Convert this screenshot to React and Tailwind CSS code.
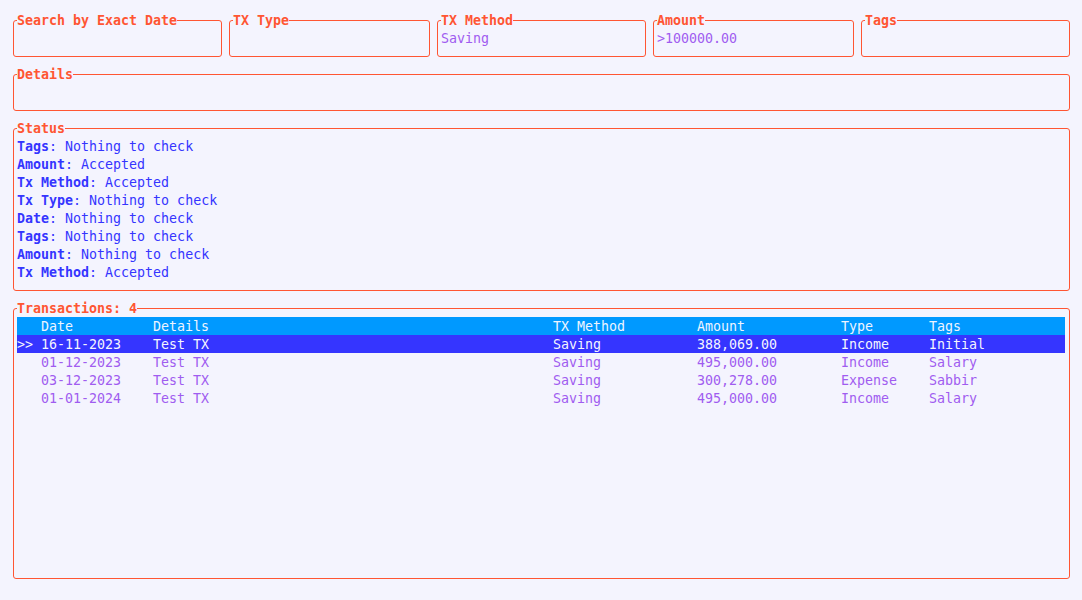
import React from 'react';

const statusLines = [
  ['Tags', 'Nothing to check'],
  ['Amount', 'Accepted'],
  ['Tx Method', 'Accepted'],
  ['Tx Type', 'Nothing to check'],
  ['Date', 'Nothing to check'],
  ['Tags', 'Nothing to check'],
  ['Amount', 'Nothing to check'],
  ['Tx Method', 'Accepted'],
];

const rows = [
  ['16-11-2023', 'Test TX', 'Saving', '388,069.00', 'Income', 'Initial'],
  ['01-12-2023', 'Test TX', 'Saving', '495,000.00', 'Income', 'Salary'],
  ['03-12-2023', 'Test TX', 'Saving', '300,278.00', 'Expense', 'Sabbir'],
  ['01-01-2024', 'Test TX', 'Saving', '495,000.00', 'Income', 'Salary'],
];

// one terminal line: 18px tall, text nudged 1px down to sit like the tui cell
const line = 'h-[18px] pt-[2px] leading-[16px] whitespace-pre';

// terminal style box: legend sits on the top border line
const Box = ({ title, className = '', children }) => (
  <fieldset className={`border border-[#ff5533] rounded-[3px] min-w-0 ${className}`}>
    <legend className={`ml-[3px] font-bold text-[#ff5533] ${line}`}>{title}</legend>
    {children}
  </fieldset>
);

const Cols = ({ cells, className }) => (
  <div className={`grid grid-cols-[24px_112px_400px_144px_144px_88px_1fr] ${line} ${className}`}>
    {cells.map((c, i) => (
      <span key={i}>{c}</span>
    ))}
  </div>
);

export default function App() {
  return (
    <div
      className="min-h-[600px] bg-[#f4f4fe] pt-[11px] pl-[13px] pr-[12px] text-[13.3px] leading-[18px]"
      style={{ fontFamily: '"DejaVu Sans Mono", "Liberation Mono", monospace' }}
    >
      <div className="grid grid-cols-[209px_201px_209px_201px_209px] gap-[7px]">
        <Box title="Search by Exact Date" className="h-[46px]" />
        <Box title="TX Type" className="h-[46px]" />
        <Box title="TX Method" className="h-[46px]">
          <div className={`pl-[3px] text-[#a05cf0] ${line}`}>Saving</div>
        </Box>
        <Box title="Amount" className="h-[46px]">
          <div className={`pl-[3px] text-[#a05cf0] ${line}`}>&gt;100000.00</div>
        </Box>
        <Box title="Tags" className="h-[46px]" />
      </div>

      <Box title="Details" className="h-[46px] mt-2" />

      <Box title="Status" className="h-[172px] mt-2">
        <div className="pl-[3px] text-[#3535ff]">
          {statusLines.map(([k, v], i) => (
            <div key={i} className={line}>
              <span className="font-bold">{k}</span>: {v}
            </div>
          ))}
        </div>
      </Box>

      <Box title="Transactions: 4" className="h-[280px] mt-2">
        <div className="pl-[3px] pr-[4px]">
          <Cols
            className="bg-[#0099ff] text-[#eef4ff]"
            cells={['', 'Date', 'Details', 'TX Method', 'Amount', 'Type', 'Tags']}
          />
          {rows.map((r, i) => (
            <Cols
              key={i}
              className={i === 0 ? 'bg-[#3535ff] text-[#f4f4fe]' : 'text-[#a05cf0]'}
              cells={[i === 0 ? '>>' : '', ...r]}
            />
          ))}
        </div>
      </Box>
    </div>
  );
}
